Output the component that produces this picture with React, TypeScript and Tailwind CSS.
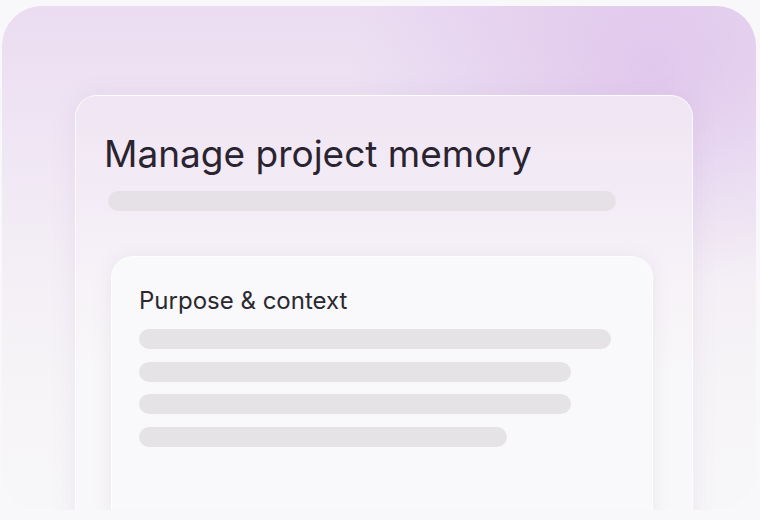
import React from 'react';

const contextBars = ['w-[472px]', 'w-[432px]', 'w-[432px]', 'w-[368px]'];

const App: React.FC = () => {
  return (
    <div className="w-[760px] h-[520px] bg-[#f8f7f9] pt-[6px] pl-[2px] overflow-hidden" style={{ fontFamily: 'Inter, "Noto Sans", sans-serif' }}>
      {/* outer glow panel */}
      <div className="relative w-[754px] h-[504px] rounded-[40px] overflow-hidden bg-[radial-gradient(ellipse_300px_220px_at_650px_60px,rgba(214,180,232,0.55),rgba(214,180,232,0)),linear-gradient(180deg,#ebdcf1_0%,#efe5f4_25%,#f3eef5_50%,#f6f4f7_75%,#f7f6f8_100%)] pt-[89px] pl-[73px]">
        {/* memory card */}
        <div className="w-[618px] h-[460px] rounded-[22px] border border-white/70 bg-[linear-gradient(180deg,#efe5f3_0%,#f3ecf6_22%,#f7f3f8_42%,#f8f7f9_60%,#f8f7f9_100%)] shadow-[0_0_24px_rgba(150,110,170,0.10)] pt-[36px] pl-[28px]">
          <h1 className="text-[37px] leading-[44px] font-normal text-[#2a2330]">Manage project memory</h1>
          <div className="mt-[15px] ml-[4px] w-[508px] h-[20px] rounded-full bg-[#e5e1e6]" />

          {/* context card */}
          <div className="mt-[45px] ml-[7px] w-[542px] h-[300px] rounded-[22px] border border-white/80 bg-[#f9f8fa] shadow-[0_2px_20px_rgba(120,100,130,0.10)] pt-[29px] pl-[27px]">
            <h2 className="text-[24px] leading-[30px] font-normal text-[#2b2830]">Purpose &amp; context</h2>
            <div className="mt-[13px] flex flex-col gap-[12.5px]">
              {contextBars.map((w, i) => (
                <div key={i} className={`${w} h-[20px] rounded-full bg-[#e5e3e6]`} />
              ))}
            </div>
          </div>
        </div>
      </div>
    </div>
  );
};

export default App;
